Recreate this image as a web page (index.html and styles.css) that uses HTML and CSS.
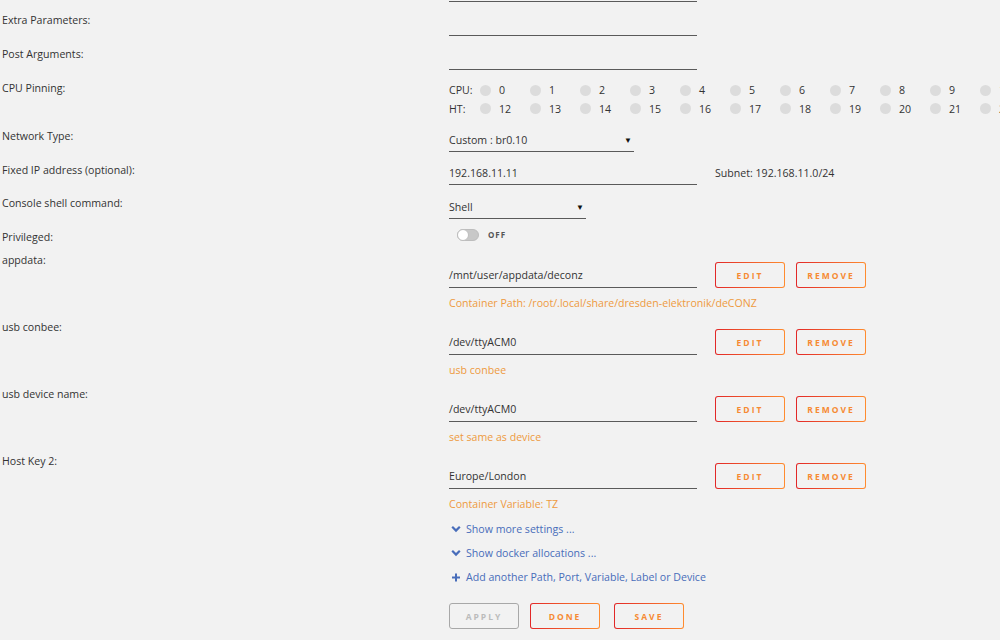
FILE: index.html
```html
<!DOCTYPE html>
<html lang="en">
<head>
  <meta charset="UTF-8" />
  <title>Update Container</title>
  <link rel="stylesheet" href="styles.css">
</head>
<body>

  <div class="form">
    <div class="row text-row">
      <div class="label"></div>
      <div class="value"><div class="field wide"></div></div>
    </div>

    <div class="row text-row">
      <div class="label">Extra Parameters:</div>
      <div class="value"><div class="field wide"></div></div>
    </div>

    <div class="row text-row">
      <div class="label">Post Arguments:</div>
      <div class="value"><div class="field wide"></div></div>
    </div>

    <div class="row cpu-row">
      <div class="label">CPU Pinning:</div>
      <div class="value cpu-block">
        <div class="cpu-line">
          <span class="cpu-name">CPU:</span>
          <span class="cpu"><i></i>0</span><span class="cpu"><i></i>1</span><span class="cpu"><i></i>2</span><span class="cpu"><i></i>3</span><span class="cpu"><i></i>4</span><span class="cpu"><i></i>5</span><span class="cpu"><i></i>6</span><span class="cpu"><i></i>7</span><span class="cpu"><i></i>8</span><span class="cpu"><i></i>9</span><span class="cpu"><i></i>10</span><span class="cpu"><i></i>11</span>
        </div>
        <div class="cpu-line">
          <span class="cpu-name">HT:</span>
          <span class="cpu"><i></i>12</span><span class="cpu"><i></i>13</span><span class="cpu"><i></i>14</span><span class="cpu"><i></i>15</span><span class="cpu"><i></i>16</span><span class="cpu"><i></i>17</span><span class="cpu"><i></i>18</span><span class="cpu"><i></i>19</span><span class="cpu"><i></i>20</span><span class="cpu"><i></i>21</span><span class="cpu"><i></i>22</span><span class="cpu"><i></i>23</span>
        </div>
      </div>
    </div>

    <div class="row text-row">
      <div class="label">Network Type:</div>
      <div class="value"><div class="field select network">Custom : br0.10<span class="arrow">&#9660;</span></div></div>
    </div>

    <div class="row text-row short">
      <div class="label">Fixed IP address (optional):</div>
      <div class="value">
        <div class="field wide">192.168.11.11</div>
        <span class="note">Subnet: 192.168.11.0/24</span>
      </div>
    </div>

    <div class="row text-row">
      <div class="label">Console shell command:</div>
      <div class="value"><div class="field select shell">Shell<span class="arrow">&#9660;</span></div></div>
    </div>

    <div class="row switch-row">
      <div class="label">Privileged:</div>
      <div class="value">
        <span class="switch"></span>
        <span class="switch-text">OFF</span>
      </div>
    </div>

    <div class="row mount-row">
      <div class="label">appdata:</div>
      <div class="value">
        <div class="mount-line">
          <div class="field mount">/mnt/user/appdata/deconz</div>
          <button class="btn first">EDIT</button>
          <button class="btn">REMOVE</button>
        </div>
        <div class="desc">Container Path: /root/.local/share/dresden-elektronik/deCONZ</div>
      </div>
    </div>

    <div class="row mount-row">
      <div class="label">usb conbee:</div>
      <div class="value">
        <div class="mount-line">
          <div class="field mount">/dev/ttyACM0</div>
          <button class="btn first">EDIT</button>
          <button class="btn">REMOVE</button>
        </div>
        <div class="desc">usb conbee</div>
      </div>
    </div>

    <div class="row mount-row">
      <div class="label">usb device name:</div>
      <div class="value">
        <div class="mount-line">
          <div class="field mount">/dev/ttyACM0</div>
          <button class="btn first">EDIT</button>
          <button class="btn">REMOVE</button>
        </div>
        <div class="desc">set same as device</div>
      </div>
    </div>

    <div class="row mount-row">
      <div class="label">Host Key 2:</div>
      <div class="value">
        <div class="mount-line">
          <div class="field mount">Europe/London</div>
          <button class="btn first">EDIT</button>
          <button class="btn">REMOVE</button>
        </div>
        <div class="desc">Container Variable: TZ</div>
      </div>
    </div>

    <div class="row">
      <div class="label"></div>
      <div class="value links">
        <a class="link"><svg width="10" height="8" viewBox="0 0 10 8"><path d="M1.2 1.8 L5 5.6 L8.8 1.8" fill="none" stroke="#486dba" stroke-width="2.2"/></svg>Show more settings ...</a>
        <a class="link"><svg width="10" height="8" viewBox="0 0 10 8"><path d="M1.2 1.8 L5 5.6 L8.8 1.8" fill="none" stroke="#486dba" stroke-width="2.2"/></svg>Show docker allocations ...</a>
        <a class="link"><svg width="10" height="9" viewBox="0 0 10 9"><path d="M5 0.5 V8.5 M1 4.5 H9" fill="none" stroke="#486dba" stroke-width="2"/></svg>Add another Path, Port, Variable, Label or Device</a>
        <div class="actions">
          <button class="btn disabled">APPLY</button>
          <button class="btn">DONE</button>
          <button class="btn save">SAVE</button>
        </div>
      </div>
    </div>
  </div>

</body>
</html>
```

FILE: styles.css
```css
body {
  margin: 0;
  background-color: #f2f2f2;
  font-family: "Open Sans", sans-serif;
  font-size: 10.6px;
  line-height: 14px;
  color: #333;
  overflow: hidden;
}
.form {
  margin-top: -32px;
}
.row {
  display: flex;
}
.label {
  width: 447px;
  padding-left: 2px;
  padding-top: 11px;
  flex: none;
}
.value {
  display: flex;
  align-items: flex-start;
  white-space: nowrap;
}

/* plain inputs */
.text-row {
  height: 34px;
}
.text-row.short {
  height: 33px;
}
.field {
  box-sizing: border-box;
  height: 34px;
  padding-top: 15px;
  border-bottom: 1px solid #5a5a5a;
}
.text-row.short .field {
  height: 33px;
  padding-top: 14px;
}
.field.wide {
  width: 248px;
}
.note {
  margin-left: 18px;
  padding-top: 14px;
}
.select {
  display: flex;
  justify-content: space-between;
}
.network {
  width: 185px;
}
.shell {
  width: 137px;
}
.arrow {
  font-size: 8px;
  color: #111;
  padding-right: 2px;
}

/* cpu pinning */
.cpu-row {
  height: 48px;
}
.cpu-block {
  flex-direction: column;
  padding-top: 11px;
}
.cpu-line {
  display: flex;
  align-items: center;
  height: 19px;
}
.cpu-name {
  width: 31px;
}
.cpu {
  display: flex;
  align-items: center;
  width: 50px;
  flex: none;
}
.cpu i {
  width: 11px;
  height: 11px;
  border-radius: 50%;
  background: #dcdcdc;
  margin-right: 8px;
}

/* privileged switch */
.switch-row {
  height: 23px;
}
.switch-row .value {
  align-items: center;
  padding-top: 10px;
  height: 11px;
}
.switch {
  position: relative;
  box-sizing: border-box;
  width: 22px;
  height: 12px;
  margin-left: 8px;
  border-radius: 6px;
  background: #c8c8c8;
  border: 1px solid #bdbdbd;
}
.switch::after {
  content: "";
  position: absolute;
  left: -1px;
  top: -1px;
  width: 12px;
  height: 12px;
  box-sizing: border-box;
  border-radius: 50%;
  background: #fff;
  border: 1px solid #bdbdbd;
}
.switch-text {
  margin-left: 9px;
  font-size: 8px;
  font-weight: bold;
  letter-spacing: 1px;
  color: #555;
}

/* path / device / variable entries */
.mount-row {
  height: 67px;
}
.mount-row .value {
  flex-direction: column;
}
.mount-line {
  display: flex;
  align-items: flex-end;
}
.field.mount {
  width: 248px;
  height: 46px;
  padding-top: 26px;
}
.desc {
  margin-top: 8px;
  color: #ee9a3e;
}
.btn {
  box-sizing: border-box;
  width: 70px;
  height: 26px;
  margin-left: 11px;
  padding: 0;
  font-family: "Open Sans", sans-serif;
  font-size: 8.5px;
  font-weight: bold;
  letter-spacing: 2px;
  color: #f68a33;
  border: 1px solid transparent;
  border-radius: 3px;
  background: linear-gradient(#f2f2f2, #f2f2f2) padding-box,
              linear-gradient(90deg, #e22828, #ff8c2f) border-box;
  cursor: pointer;
}
.btn.first {
  margin-left: 18px;
}
.btn.disabled {
  color: #bbb;
  background: #f2f2f2;
  border-color: #a8a8a8;
}

/* links and actions */
.links {
  flex-direction: column;
  padding-top: 7px;
}
.link {
  display: flex;
  align-items: center;
  height: 24px;
  padding-left: 2px;
  color: #486dba;
}
.link svg {
  margin-right: 5px;
}
.actions {
  display: flex;
  margin-top: 14px;
}
.actions .btn {
  margin-left: 0;
  margin-right: 11px;
}
.actions .btn.save {
  margin-left: 3px;
}
```
